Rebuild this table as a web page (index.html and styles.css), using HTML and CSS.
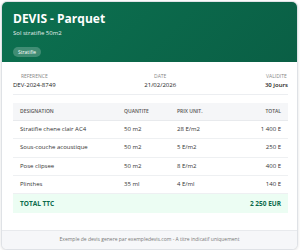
FILE: index.html
```html
<!DOCTYPE html>
<html lang="fr">
<head>
<meta charset="utf-8">
<title>Devis - Parquet</title>
<link rel="stylesheet" href="styles.css">
</head>
<body>
<div class="card">
  <div class="header">
    <h1 class="title">DEVIS - Parquet</h1>
    <div class="subtitle">Sol stratifie 50m2</div>
    <span class="badge">Stratifie</span>
  </div>
  <div class="meta">
    <div class="meta-item">
      <div class="meta-label">REFERENCE</div>
      <div class="meta-value">DEV-2024-8749</div>
    </div>
    <div class="meta-item">
      <div class="meta-label">DATE</div>
      <div class="meta-value">21/02/2026</div>
    </div>
    <div class="meta-item">
      <div class="meta-label">VALIDITE</div>
      <div class="meta-value strong">30 jours</div>
    </div>
  </div>
  <div class="table-wrap">
    <div class="row head">
      <div>DESIGNATION</div><div>QUANTITE</div><div>PRIX UNIT.</div><div class="r">TOTAL</div>
    </div>
    <div class="row">
      <div>Stratifie chene clair AC4</div><div>50 m2</div><div>28 E/m2</div><div class="r">1 400 E</div>
    </div>
    <div class="row">
      <div>Sous-couche acoustique</div><div>50 m2</div><div>5 E/m2</div><div class="r">250 E</div>
    </div>
    <div class="row">
      <div>Pose clipsee</div><div>50 m2</div><div>8 E/m2</div><div class="r">400 E</div>
    </div>
    <div class="row">
      <div>Plinthes</div><div>35 ml</div><div>4 E/ml</div><div class="r">140 E</div>
    </div>
    <div class="total">
      <div>TOTAL TTC</div><div>2 250 EUR</div>
    </div>
  </div>
  <div class="footer">Exemple de devis genere par exempledevis.com - A titre indicatif uniquement</div>
</div>
</body>
</html>
```
FILE: styles.css
```css
* { box-sizing: border-box; }
html, body { margin: 0; padding: 0; background: #ffffff; }
body {
  font-family: "Open Sans", "Noto Sans", "Liberation Sans", sans-serif;
  color: #222;
}
.card {
  margin: 1px 0 0 1px;
  width: 297px;
  height: 249px;
  border: 1px solid #dfe2e6;
  border-radius: 6px;
  overflow: hidden;
  background: #fff;
  box-shadow: 0 1px 3px rgba(0,0,0,0.12);
  display: flex;
  flex-direction: column;
}
.header {
  background: linear-gradient(135deg, #0c7150 0%, #0a5f45 100%);
  color: #fff;
  padding: 9px 10px 10px 11px;
  height: 60px;
}
.title {
  margin: 0;
  font-size: 12px;
  line-height: 15px;
  font-weight: 700;
}
.subtitle {
  margin-top: 3px;
  font-size: 6px;
  line-height: 8px;
  opacity: 0.9;
}
.badge {
  display: inline-block;
  margin-top: 4px;
  height: 10px;
  line-height: 10px;
  padding: 0 5px;
  font-size: 5px;
  border-radius: 5px;
  background: rgba(255,255,255,0.22);
}
.meta {
  margin: 0 9px 0 11px;
  padding: 11px 0 5px;
  display: flex;
  justify-content: space-between;
  border-bottom: 1px solid #eceef1;
}
.meta-item { text-align: center; }
.meta-label {
  font-size: 5px;
  line-height: 6px;
  color: #888;
}
.meta-value {
  margin-top: 2px;
  font-size: 6px;
  line-height: 8px;
  color: #222;
}
.meta-value.strong { font-weight: 600; }
.table-wrap {
  margin: 8px 9px 0 11px;
  flex: 1;
}
.row {
  display: grid;
  grid-template-columns: 104px 53px 1fr 60px;
  font-size: 6px;
  line-height: 7px;
  padding: 5px 0 5.3px;
  border-bottom: 1px solid #eef0f2;
  color: #333;
}
.row > div { padding: 0 7px; }
.row .r { text-align: right; }
.row.head {
  background: #f5f6f8;
  font-size: 5px;
  font-weight: 600;
  color: #555;
  padding: 5px 0 5px;
  border-bottom: 1px solid #e8eaed;
}
.total {
  display: flex;
  justify-content: space-between;
  background: #ecfdf3;
  color: #0b6b4c;
  font-weight: 700;
  font-size: 6.5px;
  line-height: 8px;
  padding: 5.5px 7px;
  height: 19px;
}
.footer {
  height: 19px;
  background: #f6f7f9;
  border-top: 1px solid #e8eaed;
  font-size: 5px;
  line-height: 17px;
  text-align: center;
  color: #777;
}
```
